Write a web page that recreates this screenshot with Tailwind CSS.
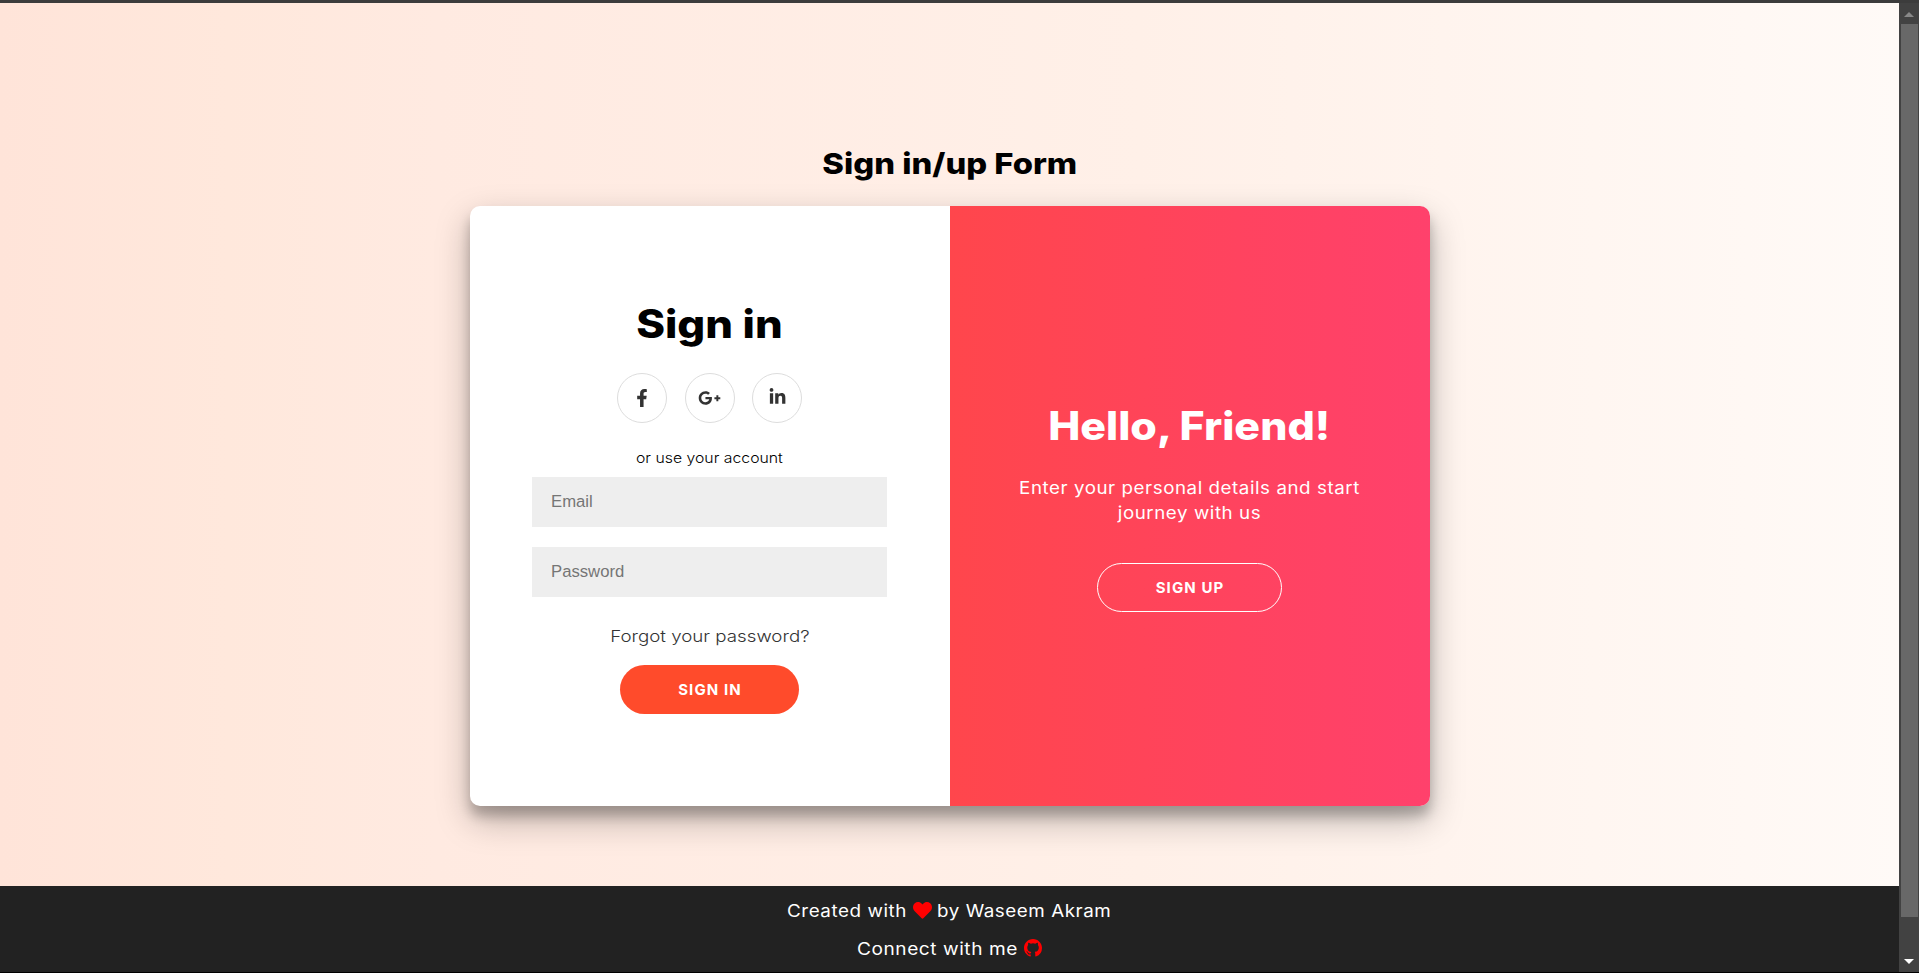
<!DOCTYPE html>
<html lang="en"><head><meta charset="utf-8"><title>Sign in/up Form</title>
<script src="https://cdn.jsdelivr.net/npm/@tailwindcss/browser@4"></script></head>
<body class="h-[973px] overflow-hidden bg-black font-['Inter',sans-serif]">
<div class="flex h-[972px] flex-col">
<div class="h-[3px] shrink-0 bg-[#3c3c3c]"></div>
<div class="flex min-h-0 flex-1">
<div class="flex w-[1899px] flex-col">
<main class="flex h-[883px] shrink-0 flex-col items-center bg-[linear-gradient(to_right,#ffe4d9,#ffe8dc_12%,#ffeae1_23%,#fff0e8_60%,#fffaf7)] pt-[142px]">
<h1 class="h-[61px] scale-x-[1.13] text-[29px] leading-[37px] font-extrabold whitespace-nowrap">Sign in/up Form</h1>
<section class="flex h-[600px] w-[960px] overflow-hidden rounded-[10px] bg-white shadow-[0_14px_34px_rgba(0,0,0,0.27),0_10px_12px_rgba(0,0,0,0.22)]">
<form class="flex w-[480px] flex-col items-center pt-[93px]">
<h2 class="h-[74px] scale-x-[1.12] text-[39px] leading-[50px] font-extrabold whitespace-nowrap">Sign in</h2>
<div class="flex h-[50px] gap-[17.5px]">
<a class="flex size-[50px] items-center justify-center rounded-full border border-[#ddd]"><svg class="h-[18px] w-[12px]" viewBox="0 0 320 512" fill="#333"><path d="M279.14 288l14.22-92.66h-88.91v-60.13c0-25.35 12.42-50.06 52.24-50.06h40.42V6.26S260.43 0 225.36 0c-73.22 0-121.08 44.38-121.08 124.72v70.62H22.89V288h81.39v224h100.17V288z"/></svg></a>
<a class="flex size-[50px] items-center justify-center rounded-full border border-[#ddd]"><svg class="h-[18px] w-[23px]" viewBox="0 0 640 512" fill="#333"><path d="M386.061 228.496c1.834 9.692 3.143 19.384 3.143 31.956C389.204 370.205 315.599 448 204.8 448c-106.084 0-192-85.915-192-192s85.916-192 192-192c51.864 0 95.083 18.859 128.611 50.292l-52.126 50.03c-14.145-13.621-39.028-29.599-76.485-29.599-65.484 0-118.92 54.221-118.92 121.277 0 67.056 53.436 121.277 118.92 121.277 75.961 0 104.513-54.745 108.965-82.773H204.8v-66.009h181.261zm185.406 6.437V179.2h-56.001v55.733h-55.733v56.001h55.733v55.733h56.001v-55.733H627.2v-56.001h-55.733z"/></svg></a>
<a class="flex size-[50px] items-center justify-center rounded-full border border-[#ddd]"><svg class="mb-[2px] h-[18px] w-[17px]" viewBox="0 0 448 512" fill="#333"><path d="M100.28 448H7.4V148.9h92.88zM53.79 108.1C24.09 108.1 0 83.5 0 53.8a53.79 53.79 0 0 1 107.58 0c0 29.7-24.1 54.3-53.79 54.3zM447.9 448h-92.68V302.4c0-34.7-.7-79.2-48.29-79.2-48.29 0-55.69 37.7-55.69 76.7V448h-92.78V148.9h89.08v40.8h1.3c12.4-23.5 42.69-48.3 87.88-48.3 94 0 111.28 61.9 111.28 142.3V448z"/></svg></a>
</div>
<p class="mt-[25px] h-[29px] scale-x-[1.09] text-[14.5px] leading-[20px] font-[360] whitespace-nowrap">or use your account</p>
<div class="h-[50px] w-[355px] bg-[#eee] pl-[19px] font-['Liberation_Sans',sans-serif] text-[16.7px] leading-[49px] text-[#757575]">Email</div>
<div class="mt-5 h-[50px] w-[355px] bg-[#eee] pl-[19px] font-['Liberation_Sans',sans-serif] text-[16.7px] leading-[49px] text-[#757575]">Password</div>
<a class="mt-[27px] h-[41px] scale-x-[1.135] text-[16.5px] leading-[24px] font-[330] whitespace-nowrap text-[#333]">Forgot your password?</a>
<div class="flex h-[49px] w-[179px] items-center justify-center rounded-full bg-[#ff4b2b] pt-[2px] pl-px text-[15px] font-bold tracking-[1.1px] text-white">SIGN IN</div>
</form>
<aside class="flex w-[480px] flex-col items-center bg-[linear-gradient(to_right,#ff464c,#ff416c)] pt-[195px] text-white">
<h2 class="h-[75px] scale-x-[1.1] text-[39px] leading-[50px] font-extrabold whitespace-nowrap">Hello, Friend!</h2>
<p class="h-[87px] scale-x-[1.103] text-center text-[17px] leading-[25px] tracking-[0.5px] whitespace-nowrap">Enter your personal details and start<br>journey with us</p>
<div class="flex h-[49px] w-[185px] items-center justify-center rounded-full border border-white pt-[2px] pl-px text-[15px] font-bold tracking-[1.1px]">SIGN UP</div>
</aside>
</section>
</main>
<footer class="flex flex-1 flex-col items-center bg-[#222] pt-[6px] pr-px text-[17px] leading-[38px] tracking-[0.5px] whitespace-nowrap text-white">
<div class="flex h-[38px] items-center"><span class="w-[120px] origin-left scale-x-[1.107]">Created with</span><svg class="mr-[5px] mb-[2px] ml-[6px] h-[17px] w-[19px]" viewBox="0 32 512 456" preserveAspectRatio="none" fill="red"><path d="M462.3 62.6C407.5 15.9 326 24.3 275.7 76.2L256 96.5l-19.7-20.3C186.1 24.3 104.5 15.9 49.7 62.6c-62.8 53.6-66.1 149.8-9.9 207.9l193.5 199.8c12.5 12.9 32.8 12.9 45.3 0l193.5-199.8c56.3-58.1 53-154.3-9.8-207.9z"/></svg><span class="w-[174px] origin-left scale-x-[1.105]">by Waseem Akram</span></div>
<div class="flex h-[38px] items-center"><span class="w-[161px] origin-left scale-x-[1.122]">Connect with me</span><svg class="mb-[2px] ml-[6px] size-[18px]" viewBox="0 0 16 16" fill="red"><path d="M8 0C3.58 0 0 3.58 0 8c0 3.54 2.29 6.53 5.47 7.59.4.07.55-.17.55-.38v-1.49c-2.01.37-2.53-.49-2.69-.94-.09-.23-.48-.94-.82-1.13-.28-.15-.68-.52-.01-.53.63-.01 1.08.58 1.23.82.72 1.21 1.87.87 2.33.66.07-.52.28-.87.51-1.07-1.78-.2-3.64-.89-3.64-3.95 0-.87.31-1.59.82-2.15-.08-.2-.36-1.02.08-2.12 0 0 .67-.21 2.2.82a7.6 7.6 0 0 1 4 0c1.53-1.04 2.2-.82 2.2-.82.44 1.1.16 1.92.08 2.12.51.56.82 1.27.82 2.15 0 3.07-1.87 3.75-3.65 3.95.29.25.54.73.54 1.48v2.19c0 .21.15.46.55.38A8 8 0 0 0 16 8c0-4.42-3.58-8-8-8z"/></svg></div>
</footer>
</div>
<div class="flex w-5 flex-col items-center bg-[#424242]"><svg class="mt-[9px] h-[5px] w-[10px]" viewBox="0 0 10 5" fill="#888"><path d="M0 5L5 0l5 5z"/></svg><div class="mt-[7px] h-[893px] w-[17px] bg-[#686868]"></div><svg class="mt-[42px] h-[5px] w-[10px]" viewBox="0 0 10 5" fill="#fff"><path d="M0 0h10L5 5z"/></svg></div>
</div></div>
</body></html>
